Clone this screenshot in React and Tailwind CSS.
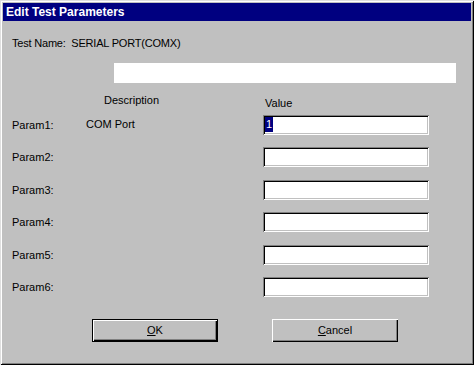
const FONT = "font-['Liberation_Sans',Arial,sans-serif]";

const params = [
  { label: "Param1:", desc: "COM Port", value: "1", gap: "mt-0" },
  { label: "Param2:", desc: "", value: "", gap: "mt-[12px]" },
  { label: "Param3:", desc: "", value: "", gap: "mt-[13px]" },
  { label: "Param4:", desc: "", value: "", gap: "mt-[12px]" },
  { label: "Param5:", desc: "", value: "", gap: "mt-[13px]" },
  { label: "Param6:", desc: "", value: "", gap: "mt-[12px]" },
];

function Field({ value }) {
  return (
    <div className="w-[166px] h-[20px] bg-white p-[2px] shadow-[inset_1px_1px_#808080,inset_-1px_-1px_#fff,inset_2px_2px_#000,inset_-2px_-2px_#c0c0c0] flex items-start">
      {value && (
        <span className="inline-block w-[8px] h-[15px] bg-[#000080] text-white text-[11px] leading-[15px] text-center">
          {value}
        </span>
      )}
    </div>
  );
}

function Button({ children, isDefault }) {
  return (
    <button
      className={`w-[126px] h-[23px] bg-[#c0c0c0] text-[11px] text-black flex items-center justify-center ${
        isDefault
          ? "shadow-[inset_0_0_0_1px_#000,inset_2px_2px_#fff,inset_-2px_-2px_#000,inset_-3px_-3px_#808080]"
          : "shadow-[inset_1px_1px_#fff,inset_-1px_-1px_#000,inset_-2px_-2px_#808080]"
      }`}
    >
      {children}
    </button>
  );
}

export default function App() {
  return (
    <div className={`w-[474px] h-[365px] bg-[#c0c0c0] p-[3px] text-black ${FONT} shadow-[inset_1px_1px_#dfdfdf,inset_-1px_-1px_#000,inset_2px_2px_#fff,inset_-2px_-2px_#808080] flex flex-col`}>
      <div className="h-[18px] bg-[#000080] text-white font-bold text-[12px] leading-[18px] pl-[3px]">
        Edit Test Parameters
      </div>

      <div className="flex flex-col -ml-[3px] text-[11px] leading-[13px]">
        <div className="mt-[16px] ml-[12px] whitespace-pre tracking-[-0.2px]">Test Name:  SERIAL PORT(COMX)</div>

        <div className="mt-[13px] ml-[114px] w-[342px] h-[20px] bg-white" />

        <div className="mt-[11px] h-[16px] flex items-start">
          <span className="ml-[104px]">Description</span>
          <span className="ml-[106px] mt-[3px]">Value</span>
        </div>

        <div className="mt-[5px] flex flex-col">
          {params.map((p) => (
            <div key={p.label} className={`${p.gap} h-[20px] flex items-center`}>
              <span className="ml-[12px] w-[74px]">{p.label}</span>
              <span className="w-[177px] -mt-[2px]">{p.desc}</span>
              <Field value={p.value} />
            </div>
          ))}
        </div>

        <div className="mt-[22px] flex">
          <div className="ml-[92px]">
            <Button isDefault>
              <span className="underline">O</span>K
            </Button>
          </div>
          <div className="ml-[54px]">
            <Button>
              <span className="underline">C</span>ancel
            </Button>
          </div>
        </div>
      </div>
    </div>
  );
}
